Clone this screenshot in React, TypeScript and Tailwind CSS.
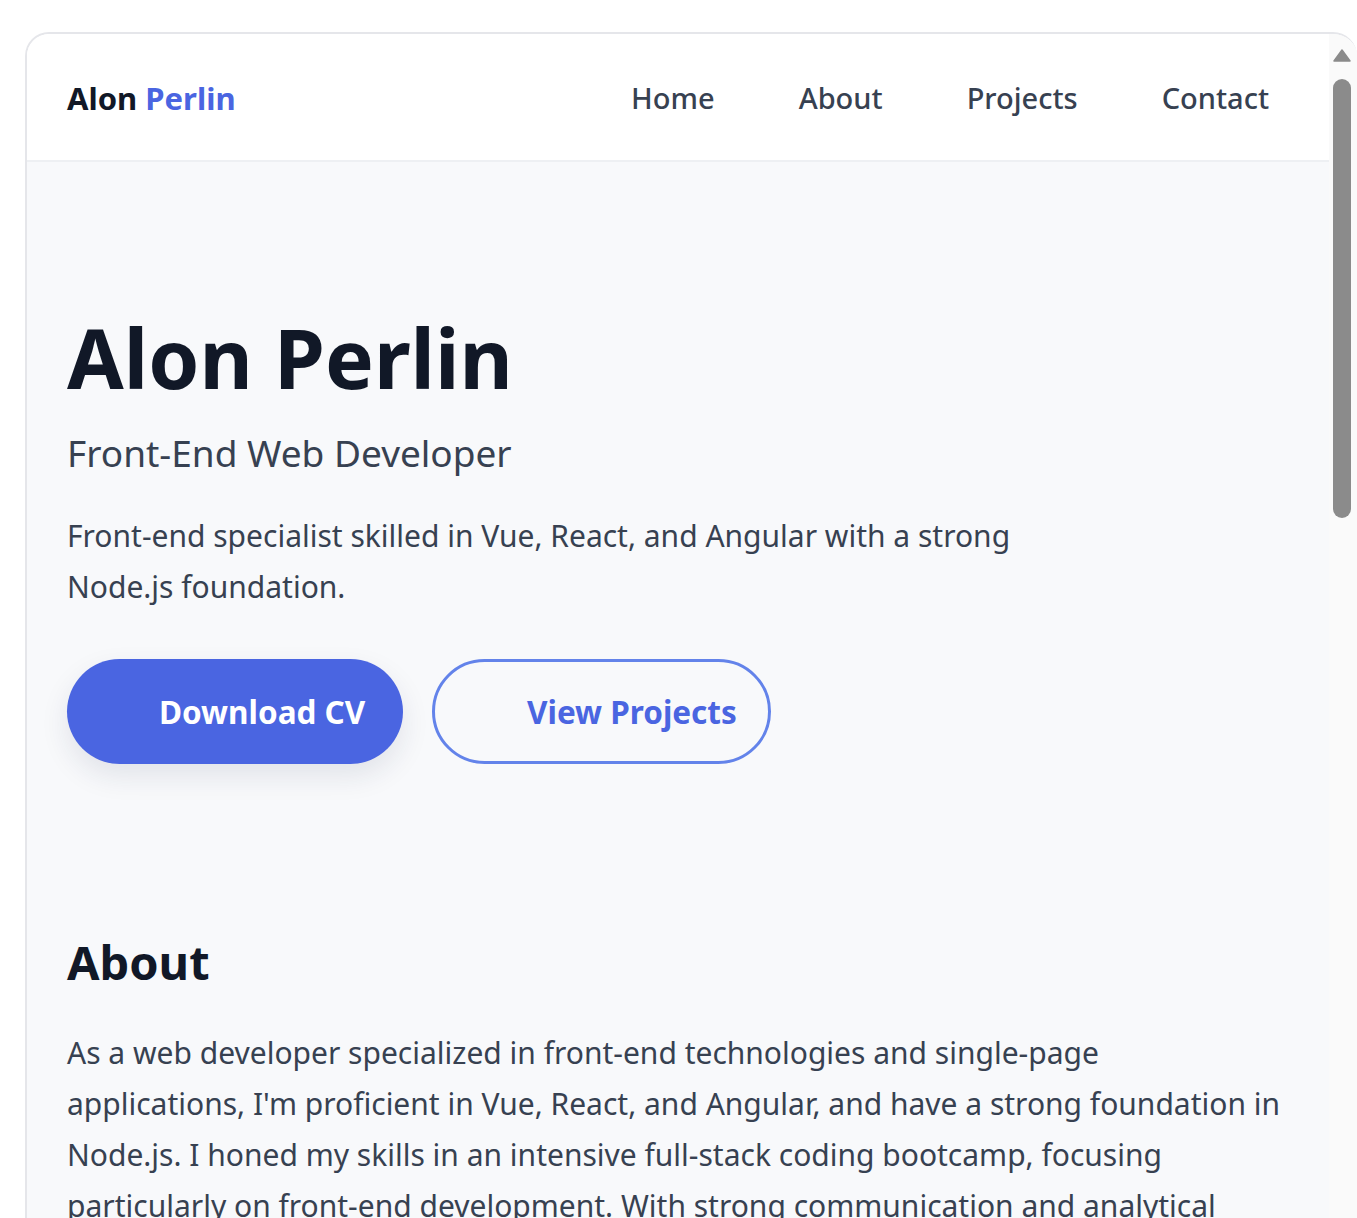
import { Fragment } from "react";

const navLinks = ["Home", "About", "Projects", "Contact"];

const font = { fontFamily: '"Noto Sans", "Open Sans", sans-serif' };

const Header = () => {
  return (
    <header className="h-[128px] shrink-0 bg-white border-b-2 border-[#eef0f3] flex items-center justify-between pl-[40px] pr-[60px] pt-[2px]">
      {/* logo */}
      <a href="#" className="text-[31px] font-bold text-[#111827]">
        Alon <span className="text-[#4a65e1]">Perlin</span>
      </a>
      <nav className="flex items-center gap-[84px]">
        {navLinks.map((link) => (
          <a key={link} href={`#${link.toLowerCase()}`} className="text-[29px] font-medium text-[#374151]">
            {link}
          </a>
        ))}
      </nav>
    </header>
  );
};

const Hero = () => {
  return (
    <section id="home" className="pt-[146px]">
      <h1 className="text-[82px] leading-[1.2] font-bold text-[#111827]">Alon Perlin</h1>
      <p className="mt-[25px] text-[37px] leading-[1.2] text-[#374151]">Front-End Web Developer</p>
      <p className="mt-[34px] max-w-[1010px] text-[30px] leading-[51px] text-[#374151]">
        Front-end specialist skilled in Vue, React, and Angular with a strong Node.js foundation.
      </p>
      <div className="mt-[47px] flex items-center gap-[29px]">
        <a
          href="#"
          className="w-[336px] h-[105px] rounded-full bg-[#4a65e1] text-white text-[31.5px] font-bold flex items-center pl-[92px] shadow-[0_12px_28px_rgba(30,40,80,0.10)]"
        >
          Download CV
        </a>
        <a
          href="#projects"
          className="w-[339px] h-[105px] rounded-full border-[3px] border-[#6383ea] text-[#4a65e1] text-[31.5px] font-bold flex items-center pl-[92px]"
        >
          View Projects
        </a>
      </div>
    </section>
  );
};

const About = () => {
  return (
    <section id="about" className="mt-[170px]">
      <h2 className="text-[47px] leading-[1.2] font-bold text-[#111827]">About</h2>
      <p className="mt-[37px] text-[30px] leading-[51px] text-[#374151]">
        As a web developer specialized in front-end technologies and single-page
        <br />
        applications, I'm proficient in Vue, React, and Angular, and have a strong foundation in
        <br />
        Node.js. I honed my skills in an intensive full-stack coding bootcamp, focusing
        <br />
        particularly on front-end development. With strong communication and analytical
        <br />
        skills, I love turning ideas into clean, fast and accessible interfaces.
      </p>
    </section>
  );
};

const Scrollbar = () => {
  return (
    <div className="w-[28px] shrink-0 bg-[#fafafa] flex flex-col items-center pt-[15px] pr-[2px]">
      <svg width="18" height="13" viewBox="0 0 18 13">
        <path d="M9 1 L17 12 L1 12 Z" fill="#8b8b8b" stroke="#8b8b8b" strokeWidth="1.5" strokeLinejoin="round" />
      </svg>
      <div className="mt-[17px] w-[18px] h-[439px] rounded-full bg-[#8b8b8b]" />
    </div>
  );
};

export default function App() {
  return (
    <div className="h-[1218px] bg-white pl-[25px] pt-[32px] overflow-hidden" style={font}>
      <div className="h-[1200px] flex rounded-t-[24px] border-2 border-r-0 border-[#e5e6ea] overflow-hidden">
        <div className="flex-1 flex flex-col">
          <Header />
          <main className="flex-1 bg-[#f8f9fb] px-[40px]">
            <Fragment>
              <Hero />
              <About />
            </Fragment>
          </main>
        </div>
        <Scrollbar />
      </div>
    </div>
  );
}
